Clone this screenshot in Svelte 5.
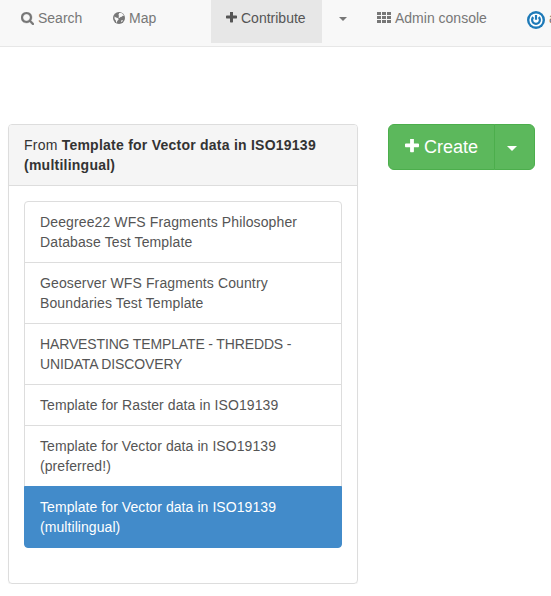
<script>
  const templates = [
    { name: 'Deegree22 WFS Fragments Philosopher Database Test Template', tracking: 0.12 },
    { name: 'Geoserver WFS Fragments Country Boundaries Test Template', tracking: 0.12 },
    { name: 'HARVESTING TEMPLATE - THREDDS - UNIDATA DISCOVERY', tracking: -0.14 },
    { name: 'Template for Raster data in ISO19139', tracking: 0.09 },
    { name: 'Template for Vector data in ISO19139 (preferred!)', tracking: 0.07 },
    { name: 'Template for Vector data in ISO19139 (multilingual)', tracking: 0.07 }
  ];
  let selected = $state(5);
  const cells = [0, 1, 2];
</script>

{#snippet plus()}
  <svg class="plus" viewBox="192 192 1408 1408" aria-hidden="true"><path d="M1600 736v192q0 40-28 68t-68 28h-416v416q0 40-28 68t-68 28h-192q-40 0-68-28t-28-68v-416h-416q-40 0-68-28t-28-68v-192q0-40 28-68t68-28h416v-416q0-40 28-68t68-28h192q40 0 68 28t28 68v416h416q40 0 68 28t28 68z" /></svg>
{/snippet}

<nav>
  <a class="search" href="#search">
    <svg class="mag" viewBox="64 128 1664 1664" aria-hidden="true"><path d="M1216 832q0-185-131.5-316.5t-316.5-131.5-316.5 131.5-131.5 316.5 131.5 316.5 316.5 131.5 316.5-131.5 131.5-316.5zm512 832q0 52-38 90t-90 38q-54 0-90-38l-343-342q-179 124-399 124-143 0-273.5-55.5t-225-150-150-225-55.5-273.500 55.500-273.500 150-225 225-150 273.500-55.500 273.500 55.500 225 150 150 225 55.500 273.500q0 220-124 399l343 343q37 37 37 90z" /></svg>
    <span>Search</span>
  </a>
  <a class="map" href="#map">
    <svg class="globe" viewBox="0 0 12 12" aria-hidden="true">
      <circle cx="6" cy="6" r="6" />
      <path class="land" d="M6.200 1.100L8.400 1l1.600 1.300 1 1.800-1.300-.3-.9 1-1.300.3-.9.8L5.300 5.200l.9-1.200-.8-.9zM1.500 4.600l1.500.9 1.700.5 1.100 1-.8 1.200-.8.9-.3 1.600-.8-.4-.3-1.900-1.200-1.300zM8 8.800l1.300-.7.6.7-1.400 1.500z" />
    </svg>
    <span>Map</span>
  </a>
  <a class="contribute" href="#contribute">{@render plus()}<span>Contribute</span></a>
  <a class="toggle" href="#more" aria-label="More"><i class="caret"></i></a>
  <a class="admin" href="#admin">
    <svg class="grid" viewBox="0 0 14 11" aria-hidden="true">
      {#each cells as r}{#each cells as c}
        <rect x={c * 5} y={r * 4} width="4" height="3" />
      {/each}{/each}
    </svg>
    <span>Admin console</span>
  </a>
  <a class="user" href="#user">
    <svg class="avatar" viewBox="0 0 18 18" aria-hidden="true">
      <circle cx="9" cy="9" r="9" fill="#1e7ab8" />
      <circle cx="9" cy="9" r="6.600" fill="#fff" />
      <path d="M6.300 6.100A3.900 3.900 0 1 0 11.700 6.100M9 4v4.800" fill="none" stroke="#1e7ab8" stroke-width="2.200" />
    </svg>
    <span>admin</span>
  </a>
</nav>

<main>
  <section class="panel">
    <header>From <strong>Template for Vector data in ISO19139 (multilingual)</strong></header>
    <div class="body">
      <div class="list">
        {#each templates as { name, tracking }, i}
          <button class="item" class:active={selected === i} style:letter-spacing="{tracking}px" onclick={() => (selected = i)}>{name}</button>
        {/each}
      </div>
    </div>
  </section>
  <div class="create">
    <button class="main">{@render plus()}<span>Create</span></button>
    <button class="drop" aria-label="Create options"><i class="caret"></i></button>
  </div>
</main>

<style>
  :global(body) { background: #fff; overflow: hidden; }
  :global(#app) { font: 14px/20px "Liberation Sans", Arial, sans-serif; color: #333; }
  * { box-sizing: border-box; }
  svg { fill: currentColor; flex: none; }
  nav {
    display: flex;
    align-items: flex-start;
    height: 47px;
    background: #f8f8f8;
    border-bottom: 1px solid #e7e7e7;
    overflow: hidden;
  }
  nav a {
    display: flex;
    align-items: center;
    flex: none;
    height: 43px;
    padding: 8px 15px 15px;
    color: #777;
    text-decoration: none;
    white-space: nowrap;
  }
  .search { margin-left: 6px; width: 92px; gap: 4px; }
  .map { width: 113px; gap: 4px; }
  .contribute { width: 111px; gap: 4px; background: #e7e7e7; color: #555; }
  .toggle { width: 40px; padding-left: 17px; }
  .toggle .caret { margin-top: 2px; }
  .admin { width: 150px; gap: 4px; }
  .user { gap: 4px; padding: 11px 15px 14px; }
  .user span { margin-top: -4px; }
  .mag { width: 13px; height: 13px; margin-top: 1px; stroke: currentColor; stroke-width: 40; }
  .globe { width: 12px; height: 12px; }
  .land { fill: #f8f8f8; }
  .plus { width: 11px; height: 11px; margin-bottom: 1px; }
  .grid { width: 14px; height: 11px; margin-bottom: 1px; }
  .avatar { width: 18px; height: 18px; }
  .caret {
    width: 0;
    height: 0;
    border-top: 4px solid;
    border-left: 4px solid transparent;
    border-right: 4px solid transparent;
  }
  main { display: flex; align-items: flex-start; gap: 30px; padding: 77px 0 0 8px; }
  .panel {
    width: 350px;
    border: 1px solid #ddd;
    border-radius: 4px;
    box-shadow: 0 1px 1px rgba(0, 0, 0, 0.05);
  }
  header {
    padding: 10px 15px;
    background: #f5f5f5;
    border-bottom: 1px solid #ddd;
    border-radius: 3px 3px 0 0;
    letter-spacing: 0.22px;
  }
  strong { letter-spacing: 0.24px; }
  .body { padding: 15px; }
  .list { display: flex; flex-direction: column; margin-bottom: 20px; }
  button { font: inherit; text-align: left; cursor: pointer; }
  .item {
    padding: 10px 15px;
    margin-bottom: -1px;
    border: 1px solid #ddd;
    background: #fff;
    color: #555;
  }
  .item:first-child { border-radius: 4px 4px 0 0; }
  .item:last-child { border-radius: 0 0 4px 4px; margin-bottom: 0; }
  .item.active { background: #428bca; border-color: #428bca; color: #fff; z-index: 1; }
  .create { display: flex; height: 46px; color: #fff; }
  .create button {
    display: flex;
    align-items: center;
    background: #5cb85c;
    border: 1px solid #4cae4c;
    color: #fff;
  }
  .create .main { width: 107px; padding: 0 16px; gap: 5px; font-size: 18px; border-radius: 6px 0 0 6px; }
  .create .plus { width: 14px; height: 14px; margin-bottom: 2px; }
  .create .drop { width: 41px; margin-left: -1px; padding: 3px 0 0 12px; border-radius: 0 6px 6px 0; }
  .create .caret { border-width: 5px 5px 0; }
</style>
